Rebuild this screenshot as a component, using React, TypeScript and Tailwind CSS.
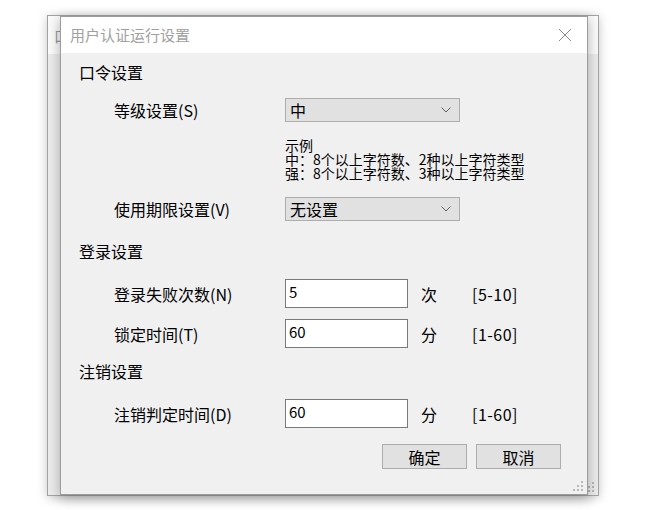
import React from "react";

const font = { fontFamily: '"Noto Sans CJK SC", "Noto Sans", sans-serif' };

function Grip() {
  return (
    <svg width="12" height="12" viewBox="0 0 12 12">
      {[
        [9, 1],
        [9, 5],
        [5, 5],
        [9, 9],
        [5, 9],
        [1, 9],
      ].map(([x, y], i) => (
        <rect key={i} x={x} y={y} width="2" height="2" fill="#b8b8b8" />
      ))}
    </svg>
  );
}

function Chevron() {
  return (
    <svg width="10" height="6" viewBox="0 0 10 6" fill="none">
      <path d="M0.5 0.5 L5 5 L9.5 0.5" stroke="#606060" strokeWidth="1" />
    </svg>
  );
}

function Combo({ value }: { value: string }) {
  return (
    <div className="flex h-[24px] w-[175px] items-center justify-between border border-[#adadad] bg-[#e1e1e1] pl-[4px] pr-[8px] text-[16px] text-black">
      <span className="leading-[20px]">{value}</span>
      <Chevron />
    </div>
  );
}

function Field({ value, unit, range }: { value: string; unit: string; range: string }) {
  return (
    <div className="flex items-center">
      <div className="h-[29px] w-[123px] border border-[#7a7a7a] bg-white pl-[3px] pt-[3px] text-[15px] leading-[18px] text-black">
        {value}
      </div>
      <span className="ml-[13px] w-[51px] text-[16px] leading-[20px]">{unit}</span>
      <span className="tracking-[0.5px] text-[16px] leading-[20px]">{range}</span>
    </div>
  );
}

function Row({ label, children, h }: { label: string; children: React.ReactNode; h: string }) {
  return (
    <div className={`flex items-center pl-[35px] ${h}`}>
      <span className="w-[171px] text-[16px] leading-[20px] text-black">{label}</span>
      {children}
    </div>
  );
}

export default function App() {
  return (
    <div className="relative h-[510px] w-[654px] overflow-hidden bg-white" style={font}>
      {/* back window */}
      <div className="absolute left-[47px] top-[15px] flex h-[481px] w-[552px] flex-col border border-[#a3a3a3] bg-[#ececec] shadow-[0_2px_10px_rgba(0,0,0,0.22)]">
        <div className="h-[38px] bg-[#fbfbfb] pl-[6px] pt-[10px] text-[15px] leading-[20px] text-[#999]">口</div>
        <div className="flex-1" />
        <div className="flex justify-end pb-[2px] pr-[3px]">
          <Grip />
        </div>
      </div>

      {/* front dialog */}
      <div className="absolute left-[60px] top-[16px] flex h-[479px] w-[528px] flex-col border border-[#9c9c9c] bg-[#f0f0f0] shadow-[0_3px_12px_rgba(0,0,0,0.3)]">
        <div className="flex h-[36px] items-center justify-between bg-white pl-[9px] pr-[15px]">
          <span className="text-[15px] leading-[20px] text-[#a0a0a0]">用户认证运行设置</span>
          <svg width="14" height="14" viewBox="0 0 14 14">
            <path d="M1 1 L13 13 M13 1 L1 13" stroke="#8a8a8a" strokeWidth="1" />
          </svg>
        </div>

        <div className="flex flex-1 flex-col pl-[18px] text-black">
          <div className="mt-[9px] h-[20px] text-[16px] leading-[20px]">口令设置</div>

          <div className="mt-[16px]">
            <Row label="等级设置(S)" h="h-[24px]">
              <Combo value="中" />
            </Row>
          </div>

          <div className="mt-[16px] pl-[206px] text-[14px] leading-[14px]">
            <div>示例</div>
            <div>中：8个以上字符数、2种以上字符类型</div>
            <div>强：8个以上字符数、3种以上字符类型</div>
          </div>

          <div className="mt-[17px]">
            <Row label="使用期限设置(V)" h="h-[24px]">
              <Combo value="无设置" />
            </Row>
          </div>

          <div className="mt-[20px] h-[20px] text-[16px] leading-[20px]">登录设置</div>

          <div className="mt-[18px]">
            <Row label="登录失败次数(N)" h="h-[29px]">
              <Field value="5" unit="次" range="[5-10]" />
            </Row>
          </div>

          <div className="mt-[11px]">
            <Row label="锁定时间(T)" h="h-[29px]">
              <Field value="60" unit="分" range="[1-60]" />
            </Row>
          </div>

          <div className="mt-[13px] h-[20px] text-[16px] leading-[20px]">注销设置</div>

          <div className="mt-[18px]">
            <Row label="注销判定时间(D)" h="h-[29px]">
              <Field value="60" unit="分" range="[1-60]" />
            </Row>
          </div>

          <div className="mt-[16px] flex justify-end gap-[9px] pr-[26px]">
            <button className="h-[25px] w-[85px] border border-[#adadad] bg-[#e1e1e1] text-[16px] leading-[20px]">确定</button>
            <button className="h-[25px] w-[85px] border border-[#adadad] bg-[#e1e1e1] text-[16px] leading-[20px]">取消</button>
          </div>

          <div className="flex-1" />
          <div className="flex justify-end pb-[2px] pr-[3px]">
            <Grip />
          </div>
        </div>
      </div>
    </div>
  );
}
